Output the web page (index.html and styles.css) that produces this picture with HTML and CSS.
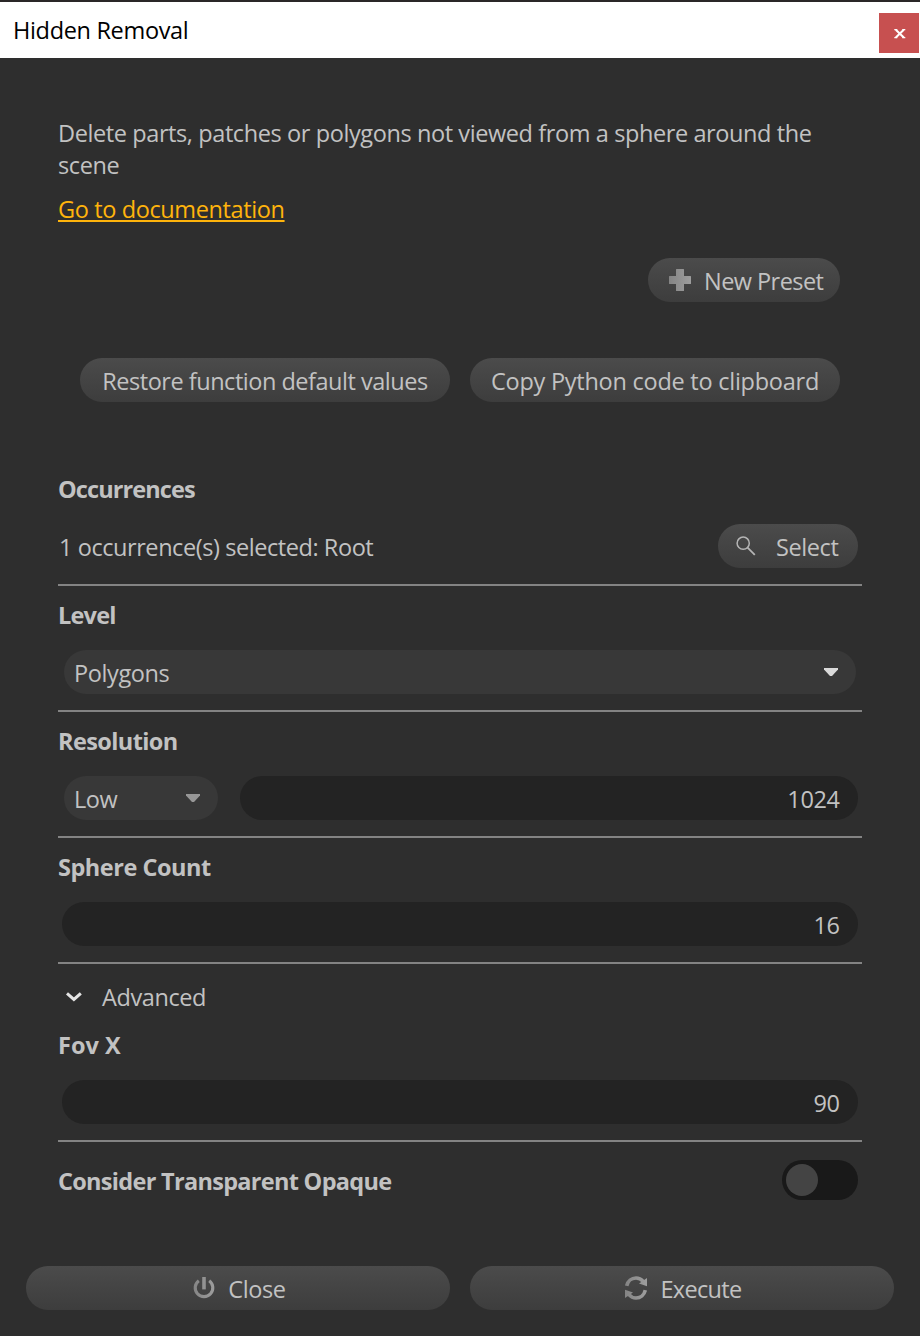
FILE: index.html
```html
<!DOCTYPE html>
<html lang="en">
<head>
<meta charset="utf-8">
<title>Hidden Removal</title>
<link rel="stylesheet" href="styles.css">
</head>
<body>
<svg class="defs" width="0" height="0">
  <defs>
    <linearGradient id="metal" gradientUnits="userSpaceOnUse" x1="0" y1="0" x2="24" y2="0">
      <stop offset="0" stop-color="#848484"/><stop offset="1" stop-color="#a0a0a0"/>
    </linearGradient>
  </defs>
</svg>
<div class="dialog">
  <header class="titlebar">
    <span class="title">Hidden Removal</span>
    <button class="close-x" aria-label="Close window">
      <svg width="12" height="10" viewBox="0 0 12 10"><path d="M1.8 .8 9.8 8.4M9.8 .8 1.8 8.4" stroke="#fff" stroke-width="2.1"/><path d="M.3 .6h3M8.3 .6h3M.3 8.6h3M8.3 8.6h3" stroke="#fff" stroke-width="1.1"/></svg>
    </button>
  </header>
  <main class="content">
    <p class="intro">Delete parts, patches or polygons not viewed from a sphere around the<br>scene</p>
    <a class="doc-link">Go to documentation</a>
    <div class="preset-row">
      <button class="btn new-preset">
        <svg width="22" height="22" viewBox="0 0 22 22"><path d="M7.6 0h6.8q.6 0 .6.6V7h6.4q.6 0 .6.6v6.8q0 .6-.6.6H15v6.4q0 .6-.6.6H7.6q-.6 0-.6-.6V15H.6q-.6 0-.6-.6V7.6Q0 7 .6 7H7V.6Q7 0 7.6 0z" fill="url(#metal)"/></svg>
        <span class="lbl">New Preset</span>
      </button>
    </div>
    <div class="action-row">
      <button class="btn"><span class="lbl restore">Restore function default values</span></button>
      <button class="btn"><span class="lbl copy">Copy Python code to clipboard</span></button>
    </div>

    <section class="field">
      <h2 class="name occurrences">Occurrences</h2>
      <div class="control">
        <span class="lbl selection">1 occurrence(s) selected: Root</span>
        <button class="btn select">
          <svg width="20" height="20" viewBox="0 0 20 20" fill="none" stroke="#b5b5b5"><circle cx="7.2" cy="7.2" r="6.1" stroke-width="1.5"/><path d="M11.6 11.6 18.8 18.8" stroke-width="1.8"/></svg>
          <span class="lbl">Select</span>
        </button>
      </div>
    </section>
    <section class="field">
      <h2 class="name level">Level</h2>
      <div class="control">
        <div class="combo combo-wide"><span class="lbl">Polygons</span>
          <svg width="14" height="8" viewBox="0 0 14 8"><path d="M0 0H14V1.6L8 8H6L0 1.6z" fill="#dadada"/></svg>
        </div>
      </div>
    </section>
    <section class="field">
      <h2 class="name resolution">Resolution</h2>
      <div class="control">
        <div class="combo combo-small"><span class="lbl">Low</span>
          <svg width="14" height="8" viewBox="0 0 14 8"><path d="M0 0H14V1.6L8 8H6L0 1.6z" fill="#979797"/></svg>
        </div>
        <div class="input input-side"><span class="lbl">1024</span></div>
      </div>
    </section>
    <section class="field">
      <h2 class="name sphere">Sphere Count</h2>
      <div class="control"><div class="input"><span class="lbl">16</span></div></div>
    </section>
    <div class="advanced">
      <svg width="16" height="11" viewBox="0 0 16 11" fill="none"><path d="M1 1.3 7.9 7.4 14.8 1.3" stroke="#e4e4e4" stroke-width="3"/></svg>
      <span>Advanced</span>
    </div>
    <section class="field fov">
      <h2 class="name fov-name">Fov X</h2>
      <div class="control"><div class="input"><span class="lbl">90</span></div></div>
    </section>
    <div class="toggle-row">
      <h2 class="name consider">Consider Transparent Opaque</h2>
      <div class="toggle"><span class="knob"></span></div>
    </div>
  </main>
  <footer class="footer">
    <button class="btn close">
      <svg width="22" height="24" viewBox="0 0 22 24" fill="none" stroke="url(#metal)"><path d="M5.8 4.7A8.8 8.8 0 1 0 16.2 4.7" stroke-width="3.1"/><path d="M11 1V13.4" stroke="#929292" stroke-width="3.6"/></svg>
      <span class="lbl">Close</span>
    </button>
    <button class="btn execute">
      <svg width="22" height="24" viewBox="0 0 22 24"><g fill="none" stroke="url(#metal)" stroke-width="3.6"><path d="M1.7 9.8C2.8 5 6.5 2 11 2 14 2 16.3 3.3 18.4 5.6"/><path d="M20.3 14.2C19.2 19 15.5 22 11 22 8 22 5.7 20.7 3.6 18.4"/></g><g fill="url(#metal)"><path d="M22 2v8.2L14 7.4z"/><path d="M0 22v-8.2L8 16.6z"/></g></svg>
      <span class="lbl">Execute</span>
    </button>
  </footer>
</div>
</body>
</html>
```

FILE: styles.css
```css
* { box-sizing: border-box; margin: 0; padding: 0; }

body {
  background: #2e2e2e;
  color: #c2c2c2;
  font: 23.5px/32px "Open Sans", "Noto Sans", sans-serif;
  letter-spacing: -0.4px;
}

svg { display: block; flex: none; }
.defs { position: absolute; }

.dialog { width: 920px; height: 1336px; overflow: hidden; white-space: nowrap; }

.titlebar {
  height: 58px;
  padding: 3px 1px 0 13px;
  border-top: 2px solid #2a2728;
  background: #fff;
  color: #000;
  display: flex;
  justify-content: space-between;
  align-items: center;
}
.title { margin-top: -3px; letter-spacing: -0.33px; }
.close-x {
  width: 40px;
  height: 40px;
  border: 0;
  background: #c75050;
  display: flex;
  align-items: center;
  justify-content: center;
  padding: 1px 0 0 2px;
  margin-top: 3px;
}

.content { padding: 59px 58px 0; }
.doc-link {
  display: block;
  margin-top: 12px;
  color: #ffb40c;
  letter-spacing: -0.38px;
  text-decoration: underline;
  text-decoration-thickness: 2px;
  text-underline-offset: 2px;
  text-decoration-skip-ink: none;
}

.btn {
  height: 44px;
  border: 0;
  border-radius: 22px;
  background: linear-gradient(#4b4b4b, #3d3d3d);
  color: inherit;
  font: inherit;
  letter-spacing: inherit;
  display: flex;
  align-items: center;
  justify-content: center;
}
.lbl { padding-top: 2px; }

.preset-row { display: flex; justify-content: flex-end; margin: 33px 22px 0 0; }
.new-preset { width: 192px; padding-left: 21px; gap: 13px; justify-content: flex-start; letter-spacing: -0.55px; }
.action-row { display: grid; grid-template-columns: 370px 370px; gap: 20px; margin: 56px 22px 71px; }
.restore { letter-spacing: -0.48px; }
.copy { letter-spacing: -0.25px; }

.field { padding-bottom: 16px; border-bottom: 2px solid #838383; margin-bottom: 13px; }
.name { font-size: 23.5px; font-weight: 700; line-height: 32px; }
.occurrences { letter-spacing: -0.9px; }
.level { letter-spacing: -0.8px; }
.resolution { letter-spacing: -0.6px; }
.sphere { letter-spacing: -0.47px; }
.fov-name { letter-spacing: 0; }
.consider { letter-spacing: -0.7px; }
.control { margin: 19px 4px 0; display: flex; align-items: center; justify-content: space-between; }
.selection { margin-left: -3px; letter-spacing: -0.43px; }
.select { width: 140px; padding-left: 18px; gap: 20px; justify-content: flex-start; }

.combo {
  height: 44px;
  border-radius: 22px;
  background: #383838;
  padding: 0 18px 0 10px;
  display: flex;
  align-items: center;
  justify-content: space-between;
}
.combo-wide { width: 792px; margin-left: 2px; }
.combo-small { width: 154px; margin-left: 2px; }
.input {
  flex: 1;
  height: 44px;
  border-radius: 22px;
  background: #232323;
  padding-right: 18.5px;
  display: flex;
  align-items: center;
  justify-content: flex-end;
}
.input-side { margin-left: 22px; }

.advanced { display: flex; align-items: center; gap: 20px; padding: 4px 0 0 8px; }
.fov { margin-top: 16px; margin-bottom: 18px; }
.toggle-row { display: flex; justify-content: space-between; align-items: center; padding-right: 4px; }
.toggle-row .name { padding-top: 2px; }
.toggle {
  width: 76px;
  height: 40px;
  border-radius: 20px;
  background: #191919;
  padding: 4px;
}
.knob { display: block; width: 32px; height: 32px; border-radius: 50%; background: #444; }

.footer { display: grid; grid-template-columns: 1fr 1fr; gap: 20px; padding: 66px 26px 0; }
.close, .execute { gap: 13px; padding-left: 3px; }
.execute { letter-spacing: -0.65px; }
```
